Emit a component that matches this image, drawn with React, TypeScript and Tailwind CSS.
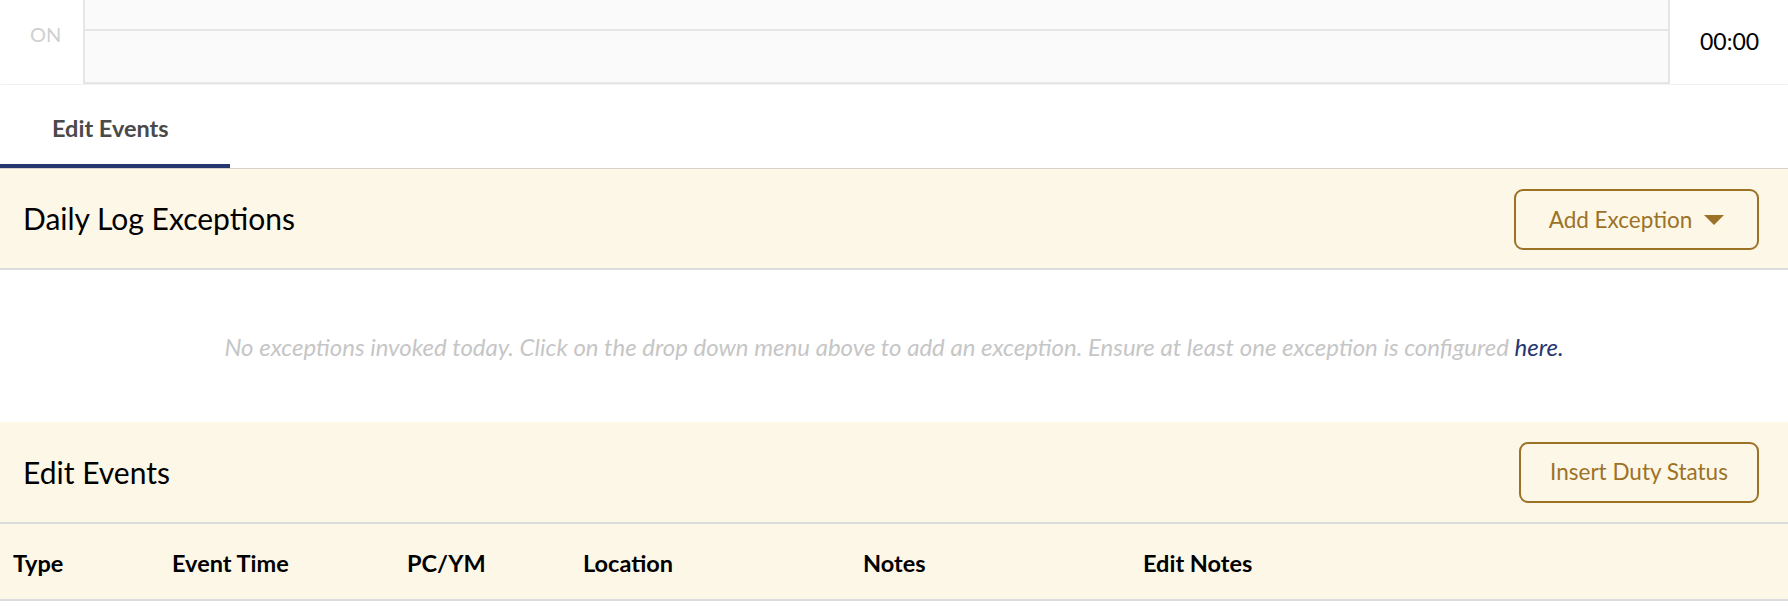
import React from "react";

const columns = [
  { label: "Type", w: "w-[159px]" },
  { label: "Event Time", w: "w-[235px]" },
  { label: "PC/YM", w: "w-[176px]" },
  { label: "Location", w: "w-[280px]" },
  { label: "Notes", w: "w-[280px]" },
  { label: "Edit Notes", w: "w-[200px]" },
];

function OutlineButton({ children, className }: { children: React.ReactNode; className?: string }) {
  return (
    <button
      className={
        "h-[61px] flex items-center justify-center gap-[12px] rounded-[9px] border-2 border-[#9c7226] text-[#9c7226] text-[22.5px] " +
        (className ?? "")
      }
    >
      {children}
    </button>
  );
}

export default function App() {
  return (
    <div className="w-full bg-white font-['Lato','Open_Sans',sans-serif] text-black">
      {/* chart row */}
      <div className="flex h-[85px] border-b border-[#f3f3f3]">
        <div className="w-[83px] pl-[30px] pt-[19px] text-[20px] text-[#cfcfcf]">ON</div>
        <div className="flex-1 bg-[#fafafa] border-x-2 border-b-2 border-[#e6e6e6]">
          <div className="h-[31px] border-b-2 border-[#e6e6e6]" />
        </div>
        <div className="w-[118px] pl-[30px] pt-[24px] text-[23px]">00:00</div>
      </div>

      {/* tabs */}
      <div className="flex h-[84px] border-b border-[#d6d3cc] shadow-[0_1px_2px_rgba(0,0,0,0.12)]">
        <div className="w-[230px] flex flex-col">
          <div className="flex-1 flex items-center pl-[52px] pt-[8px] text-[23.5px] font-bold text-[#4a4a4a]">
            Edit Events
          </div>
          <div className="h-[4px] bg-[#26366f]" />
        </div>
      </div>

      {/* daily log exceptions */}
      <div className="flex items-center justify-between h-[101px] bg-[#fdf7e8] border-b-2 border-[#dcdcdc] pl-[23px] pr-[29px]">
        <div className="text-[30px]">Daily Log Exceptions</div>
        <OutlineButton className="w-[245px] mt-[2px]">
          <span>Add Exception</span>
          <svg width="20" height="10" viewBox="0 0 20 10" className="fill-[#9c7226]">
            <path d="M0 0h20L10 10z" />
          </svg>
        </OutlineButton>
      </div>

      <div className="h-[152px] flex items-center justify-center pt-[2px]">
        <p className="italic text-[24px] text-[#c6c6c6]">
          No exceptions invoked today. Click on the drop down menu above to add an exception. Ensure at
          least one exception is configured <a className="text-[#26366f]">here.</a>
        </p>
      </div>

      {/* edit events */}
      <div className="flex items-center justify-between h-[102px] bg-[#fdf7e8] border-b-2 border-[#dcdcdc] pl-[23px] pr-[29px]">
        <div className="text-[30px]">Edit Events</div>
        <OutlineButton className="w-[240px]">Insert Duty Status</OutlineButton>
      </div>

      <div className="flex items-center h-[77px] bg-[#fdf7e8] border-b-2 border-[#dcdcdc] pl-[13px] pt-[4px] text-[23.5px] font-bold">
        {columns.map((c) => (
          <div key={c.label} className={c.w}>
            {c.label}
          </div>
        ))}
      </div>
    </div>
  );
}
